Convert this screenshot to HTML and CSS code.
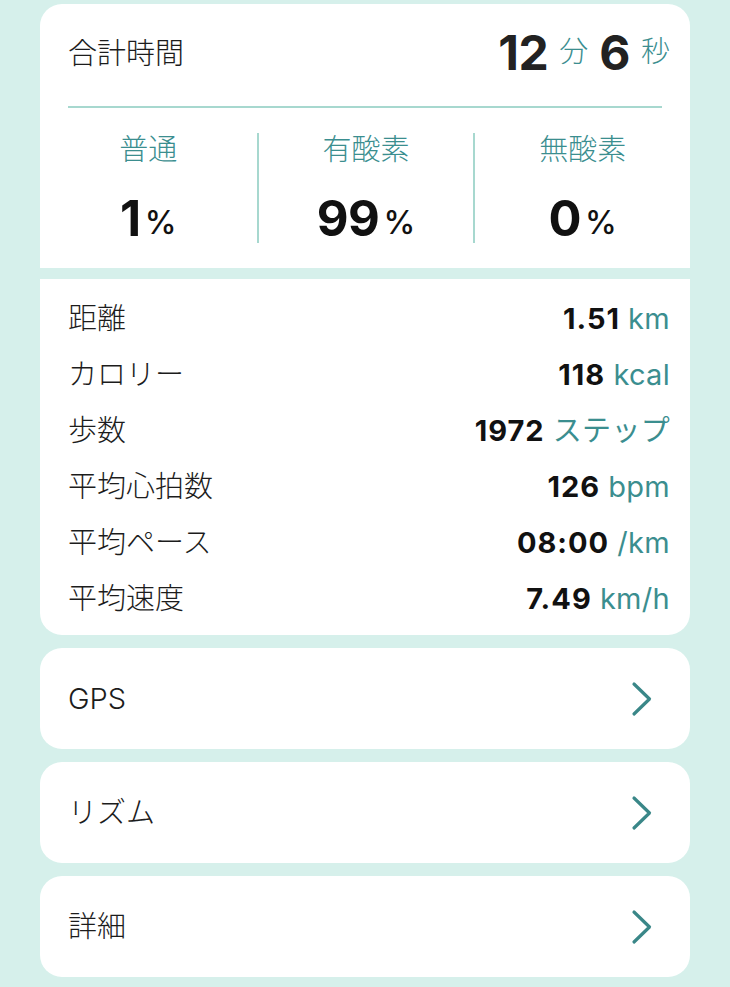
FILE: index.html
```html
<!DOCTYPE html>
<html lang="ja">
<head>
<meta charset="utf-8">
<link rel="stylesheet" href="styles.css">
</head>
<body>
<main class="page">
  <section class="card card-top">
    <div class="total">
      <span class="label">合計時間</span>
      <span class="total-value"><b class="big">12</b><span class="unit-jp">分</span><b class="big">6</b><span class="unit-jp">秒</span></span>
    </div>
    <div class="rule"></div>
    <div class="zones">
      <div class="zone">
        <div class="zone-label">普通</div>
        <div class="zone-value"><b>1</b><span class="pct">%</span></div>
      </div>
      <div class="zone">
        <div class="zone-label">有酸素</div>
        <div class="zone-value"><b>99</b><span class="pct">%</span></div>
      </div>
      <div class="zone">
        <div class="zone-label">無酸素</div>
        <div class="zone-value"><b>0</b><span class="pct">%</span></div>
      </div>
    </div>
  </section>

  <section class="card card-stats">
    <div class="stat"><span class="label">距離</span><span class="val"><b>1.51</b> <span class="unit">km</span></span></div>
    <div class="stat"><span class="label">カロリー</span><span class="val"><b>118</b> <span class="unit">kcal</span></span></div>
    <div class="stat"><span class="label">歩数</span><span class="val"><b>1972</b> <span class="unit">ステップ</span></span></div>
    <div class="stat"><span class="label">平均心拍数</span><span class="val"><b>126</b> <span class="unit">bpm</span></span></div>
    <div class="stat"><span class="label">平均ペース</span><span class="val"><b>08:00</b> <span class="unit">/km</span></span></div>
    <div class="stat"><span class="label">平均速度</span><span class="val"><b>7.49</b> <span class="unit">km/h</span></span></div>
  </section>

  <a class="card link-card">
    <span class="label">GPS</span>
    <svg class="chev" viewBox="0 0 24 36" width="24" height="36"><path d="M4 3 L19.5 18 L4 33" fill="none" stroke="#3a8788" stroke-width="3.2" stroke-linecap="round" stroke-linejoin="round"/></svg>
  </a>
  <a class="card link-card">
    <span class="label">リズム</span>
    <svg class="chev" viewBox="0 0 24 36" width="24" height="36"><path d="M4 3 L19.5 18 L4 33" fill="none" stroke="#3a8788" stroke-width="3.2" stroke-linecap="round" stroke-linejoin="round"/></svg>
  </a>
  <a class="card link-card">
    <span class="label">詳細</span>
    <svg class="chev" viewBox="0 0 24 36" width="24" height="36"><path d="M4 3 L19.5 18 L4 33" fill="none" stroke="#3a8788" stroke-width="3.2" stroke-linecap="round" stroke-linejoin="round"/></svg>
  </a>
</main>
</body>
</html>
```

FILE: styles.css
```css
html, body {
  margin: 0;
  padding: 0;
  background: #d6f0eb;
}
body {
  font-family: Inter, "Noto Sans CJK JP", sans-serif;
  color: #1c1c1c;
}
.page {
  padding: 4px 40px 0;
  display: flex;
  flex-direction: column;
}
.card {
  background: #fff;
  border-radius: 22px;
}
.card-top {
  border-radius: 22px 22px 0 0;
}
.total {
  height: 98px;
  padding: 0 20px 4px 28px;
  display: flex;
  align-items: center;
  justify-content: space-between;
}
.label {
  font-size: 29px;
  font-weight: 300;
  color: #1c1c1c;
  line-height: 1;
}
.total-value {
  display: flex;
  align-items: center;
  gap: 11px;
  line-height: 1;
}
.big {
  font-size: 48px;
  font-weight: 700;
  letter-spacing: -0.5px;
  color: #222;
}
.unit-jp {
  font-size: 29px;
  font-weight: 300;
  color: #3b8e8f;
  margin-top: -4px;
}
.rule {
  height: 2px;
  margin: 0 28px;
  background: #a7d8cf;
}
.zones {
  display: grid;
  grid-template-columns: 1fr 1fr 1fr;
  padding: 25px 0 25px;
}
.zone {
  display: flex;
  flex-direction: column;
  align-items: center;
}
.zone + .zone {
  border-left: 2px solid #a7d8cf;
}
.zone-label {
  font-size: 29px;
  font-weight: 300;
  line-height: 34px;
  height: 34px;
  color: #3b8e8f;
}
.zone-value {
  margin-top: 26px;
  height: 50px;
  display: flex;
  align-items: center;
  line-height: 1;
}
.zone-value b {
  font-size: 49px;
  font-weight: 700;
  color: #111;
  letter-spacing: -0.5px;
}
.pct {
  font-size: 32px;
  font-weight: 500;
  color: #111;
  margin-left: 4px;
  margin-top: 10px;
}
.card-stats {
  margin-top: 11px;
  border-radius: 0 0 22px 22px;
  padding: 11px 20px 9px 28px;
}
.stat {
  height: 56px;
  display: flex;
  align-items: center;
  justify-content: space-between;
}
.val {
  font-size: 29px;
  white-space: pre;
  line-height: 1;
}
.val b {
  font-weight: 700;
  color: #111;
  letter-spacing: 1px;
}
.unit {
  color: #3b8e8f;
  font-weight: 400;
  letter-spacing: 0.3px;
}
.link-card {
  margin-top: 13px;
  height: 101px;
  padding: 0 36px 0 28px;
  display: flex;
  align-items: center;
  justify-content: space-between;
}
.chev {
  display: block;
}
```
